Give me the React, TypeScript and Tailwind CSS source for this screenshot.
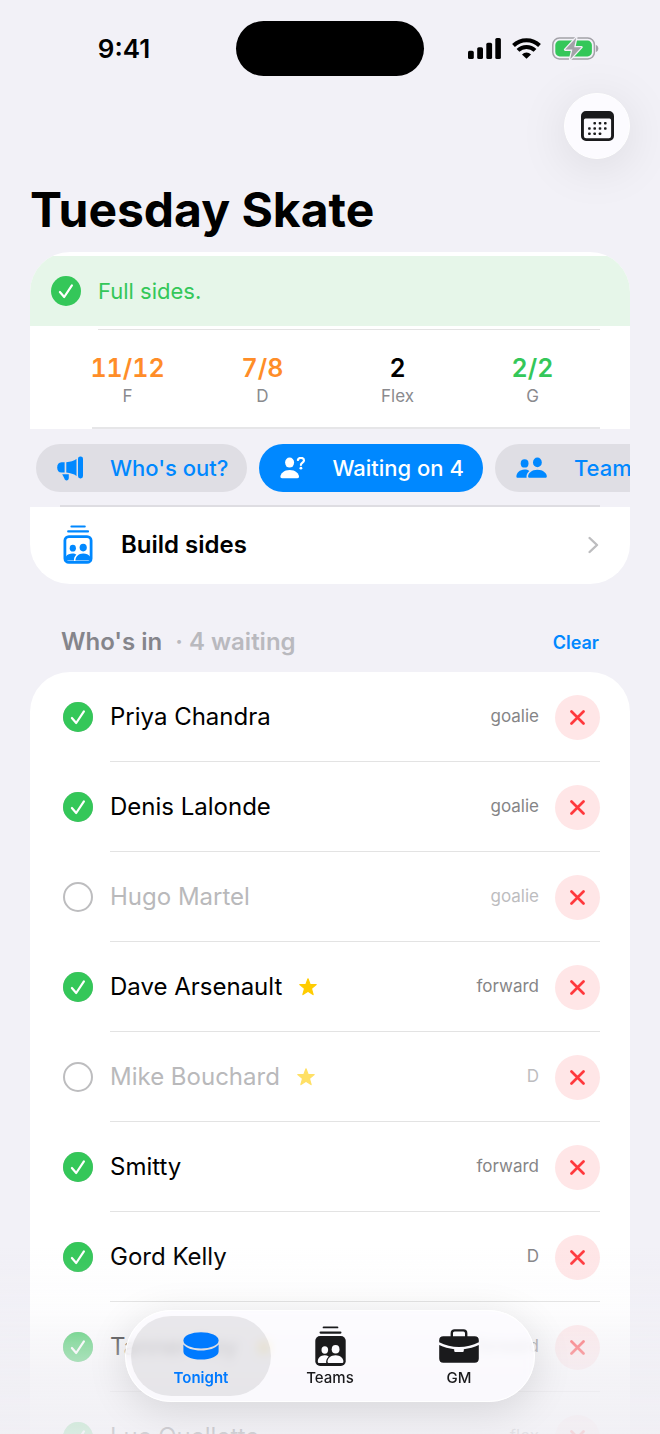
// ============================================================
// Tuesday Skate - Tonight screen
// ============================================================

import React, { useState } from "react";

// ── Data ────────────────────────────────────────────────────

type Player = {
    name: string;
    role: string;
    isIn: boolean;
    star?: boolean;
};

const PLAYERS: Player[] = [
    { name: "Priya Chandra", role: "goalie", isIn: true },
    { name: "Denis Lalonde", role: "goalie", isIn: true },
    { name: "Hugo Martel", role: "goalie", isIn: false },
    { name: "Dave Arsenault", role: "forward", isIn: true, star: true },
    { name: "Mike Bouchard", role: "D", isIn: false, star: true },
    { name: "Smitty", role: "forward", isIn: true },
    { name: "Gord Kelly", role: "D", isIn: true },
    { name: "Tanner Roy", role: "forward", isIn: true, star: true },
    { name: "Luc Ouellette", role: "flex", isIn: true },
];

const STATS = [
    { value: "11/12", label: "F", color: "text-[#ff8d28]" },
    { value: "7/8", label: "D", color: "text-[#ff8d28]" },
    { value: "2", label: "Flex", color: "text-black" },
    { value: "2/2", label: "G", color: "text-[#34c759]" },
];

// ── Icons ───────────────────────────────────────────────────

function SignalIcon() {
    return (
        <svg width="33" height="21" viewBox="0 0 33 21" fill="currentColor">
            <rect x="0" y="12.8" width="5.8" height="8.2" rx="1.6" />
            <rect x="9.2" y="9.2" width="5.8" height="11.8" rx="1.6" />
            <rect x="18.3" y="4.8" width="5.8" height="16.2" rx="1.6" />
            <rect x="27.3" y="0" width="5.6" height="21" rx="1.6" />
        </svg>
    );
}

function WifiIcon() {
    return (
        <svg width="29" height="21" viewBox="0 0 29 21" fill="none" stroke="currentColor" strokeWidth="4">
            <path d="M1.5 7.5 A18.6 18.6 0 0 1 27.5 7.5" />
            <path d="M6 12.4 A12.2 12.2 0 0 1 23 12.4" />
            <path d="M14.5 20.8 L10 16.4 A6.4 6.4 0 0 1 19 16.4 Z" fill="currentColor" stroke="none" />
        </svg>
    );
}

function BatteryIcon() {
    return (
        <svg width="47" height="23" viewBox="0 0 47 23">
            <rect x="0.8" y="1.1" width="41.6" height="20.8" rx="6.6" fill="none" stroke="#a3a2a8" strokeWidth="1.5" />
            <rect x="3.3" y="3.6" width="36.6" height="15.8" rx="4.4" fill="#34c759" />
            <path d="M43.9 8 C47.1 8.8 47.1 14.2 43.9 15 Z" fill="#a3a2a8" />
            <path
                d="M24.2 0.8 L13.2 12.6 H20.4 L18.2 22.2 L29.4 10.2 H22.2 Z"
                fill="#a3a2a8"
                stroke="#f2f1f7"
                strokeWidth="2.6"
                strokeLinejoin="round"
                paintOrder="stroke"
            />
        </svg>
    );
}

function CalendarIcon() {
    const dots = [
        [13.7, 12.3], [19, 12.3], [24.3, 12.3],
        [8.4, 17.5], [13.7, 17.5], [19, 17.5], [24.3, 17.5],
        [8.4, 22.7], [13.7, 22.7], [19, 22.7],
    ];
    return (
        <svg width="33" height="30" viewBox="0 0 33 30" fill="#1a1a1c">
            <path
                fillRule="evenodd"
                d="M5 0 H28 A5 5 0 0 1 33 5 V25 A5 5 0 0 1 28 30 H5 A5 5 0 0 1 0 25 V5 A5 5 0 0 1 5 0 Z M4.5 7.6 A1.6 1.6 0 0 0 2.9 9.2 V25 A2.2 2.2 0 0 0 5.1 27.2 H27.9 A2.2 2.2 0 0 0 30.1 25 V9.2 A1.6 1.6 0 0 0 28.5 7.6 Z"
            />
            {dots.map(([x, y]) => (
                <rect key={`${x}-${y}`} x={x - 1.3} y={y - 1.3} width="2.6" height="2.6" rx="0.8" />
            ))}
        </svg>
    );
}

function CheckCircle({ className = "" }: { className?: string }) {
    return (
        <svg className={className} width="30" height="30" viewBox="0 0 30 30" fill="none">
            <circle cx="15" cy="15" r="15" fill="#34c759" />
            <path d="M8.9 16 L13.2 21 L20.9 9.4" stroke="#fff" strokeWidth="2.2" strokeLinecap="round" strokeLinejoin="round" />
        </svg>
    );
}

function StarIcon() {
    return (
        <svg width="18" height="18" viewBox="0 0 18 18" fill="#ffcc00">
            <path
                d="M9 0.8 L11.1 6.4 L17.2 6.6 L12.4 10.5 L14.1 16.6 L9 13.2 L3.9 16.6 L5.6 10.5 L0.8 6.6 L6.9 6.4 Z"
                stroke="#ffcc00"
                strokeWidth="1.2"
                strokeLinejoin="round"
            />
        </svg>
    );
}

function MegaphoneIcon() {
    return (
        <svg width="27" height="25" viewBox="0 0 27 25" fill="currentColor">
            <rect x="21" y="0.4" width="5" height="22" rx="2.3" />
            <path d="M9.3 6.2 C13.4 5.8 16.8 4.6 19.5 2.9 V19.9 C16.8 18.2 13.4 17 9.3 16.6 Z" />
            <path d="M7.6 6.3 V16.5 H4.6 C1.6 16.5 0.2 14.4 0.2 11.4 C0.2 8.4 1.6 6.3 4.6 6.3 Z" />
            <path d="M5.2 18.2 H11.8 V21.8 C11.8 23.6 10.8 24.4 9.6 24.4 C8.4 24.4 7.6 23.6 7.3 22.2 Z" />
        </svg>
    );
}

function PersonQuestionIcon() {
    return (
        <svg width="26" height="22" viewBox="0 0 26 22" fill="currentColor">
            <ellipse cx="9.6" cy="5.6" rx="4.5" ry="5" />
            <path d="M2 21.2 C0.9 21.2 0.4 20.6 0.4 19.6 C0.4 16.6 4 12.9 9.7 12.9 C15.4 12.9 19 16.6 19 19.6 C19 20.6 18.5 21.2 17.4 21.2 Z" />
            <path d="M17.9 3 C18.2 1.4 19.4 0.9 20.9 0.9 C22.7 0.9 24 1.9 24 3.4 C24 5.6 20.9 5.6 20.9 8" fill="none" stroke="currentColor" strokeWidth="2.2" strokeLinecap="round" />
            <circle cx="20.9" cy="11.2" r="1.4" />
        </svg>
    );
}

function PeopleIcon() {
    return (
        <svg width="32" height="22" viewBox="0 0 32 22" fill="currentColor">
            <ellipse cx="8.6" cy="6.4" rx="3.9" ry="4.2" />
            <ellipse cx="21.4" cy="5.4" rx="4.4" ry="4.9" />
            <path d="M1.8 20.8 C0.8 20.8 0.4 20.2 0.4 19.4 C0.4 16.4 3.6 12.6 8.6 12.6 C10.4 12.6 12 13.1 13.3 13.9 C11.2 15.6 10.2 18 10.6 20.8 Z" />
            <path d="M13.8 20.8 C12.7 20.8 12.1 20.2 12.1 19.2 C12.1 16.4 15.6 12.7 21.4 12.7 C27.2 12.7 30.8 16.4 30.8 19.2 C30.8 20.2 30.2 20.8 29.1 20.8 Z" />
        </svg>
    );
}

// Stack of cards with two people, outlined in the list row
function StackIcon() {
    return (
        <svg width="30" height="39" viewBox="0 0 30 39" fill="none" stroke="currentColor">
            <path d="M8.4 1.5 H21.8" strokeWidth="2" strokeLinecap="round" />
            <path d="M5.2 6.4 H25" strokeWidth="2.2" strokeLinecap="round" />
            <rect x="1.9" y="11.6" width="26.2" height="25.8" rx="4" fill="#fff" strokeWidth="2.8" />
            <g fill="currentColor" stroke="none">
                <ellipse cx="9.8" cy="23.2" rx="3.1" ry="3.4" />
                <ellipse cx="20.2" cy="22.6" rx="3.6" ry="3.8" />
                <path d="M3 35.6 V31.4 C4.4 29.2 6.8 28.4 9.6 28.4 C11 28.4 12.4 28.8 13.4 29.6 C11.6 31.4 10.8 33.4 11 35.6 Z" />
                <path d="M12.4 35.6 C12.2 32 15.4 28.6 20.2 28.6 C23.2 28.6 25.6 29.8 27 31.6 V35.6 Z" />
            </g>
        </svg>
    );
}

// Same stack, filled, for the tab bar
function StackFillIcon() {
    return (
        <svg width="31" height="40" viewBox="0 0 31 40" fill="none">
            <path d="M8.6 1.4 H22.4" stroke="currentColor" strokeWidth="1.9" strokeLinecap="round" />
            <path d="M5.6 6.6 H25.4" stroke="currentColor" strokeWidth="2.2" strokeLinecap="round" />
            <rect x="0.3" y="10" width="30.4" height="30" rx="4.8" fill="currentColor" />
            <g fill="#fcfbff">
                <ellipse cx="9.8" cy="24" rx="3.3" ry="3.7" />
                <ellipse cx="20.6" cy="23.2" rx="3.9" ry="4.3" />
                <path d="M4.4 37 C3.4 37 2.8 36.4 2.8 35.4 C2.8 32 5.6 29.2 9.6 29.2 C11.2 29.2 12.6 29.6 13.7 30.4 C11.8 32.2 10.9 34.4 11.2 37 Z" />
                <path d="M14 37 C13 37 12.5 36.4 12.5 35.4 C12.5 32.2 15.8 29.2 20.6 29.2 C25.2 29.2 28.4 32.2 28.4 35.4 C28.4 36.4 27.8 37 26.8 37 Z" />
            </g>
        </svg>
    );
}

function PuckIcon() {
    return (
        <svg width="36" height="28" viewBox="0 0 36 28" fill="currentColor">
            <ellipse cx="18" cy="8.4" rx="17.6" ry="8.2" />
            <path d="M0.4 12.4 C3.4 16.2 10 18.4 18 18.4 C26 18.4 32.6 16.2 35.6 12.4 V19.4 C35.6 24 27.8 27.6 18 27.6 C8.2 27.6 0.4 24 0.4 19.4 Z" />
        </svg>
    );
}

function BriefcaseIcon() {
    return (
        <svg width="40" height="34" viewBox="0 0 40 34" fill="currentColor">
            <path d="M12.8 8 V4.2 C12.8 2.4 13.8 1.4 15.6 1.4 H24.4 C26.2 1.4 27.2 2.4 27.2 4.2 V8" fill="none" stroke="currentColor" strokeWidth="2.4" />
            <path d="M4.4 7.2 H35.6 C38.4 7.2 39.8 8.6 39.8 11.2 V13.2 C34 16.4 27 18 20 18 C13 18 6 16.4 0.2 13.2 V11.2 C0.2 8.6 1.6 7.2 4.4 7.2 Z" />
            <path d="M0.2 16 C4.8 18.3 9.8 19.6 15.2 20.2 V21.4 C15.2 22.5 15.8 23 16.8 23 H23.2 C24.2 23 24.8 22.5 24.8 21.4 V20.2 C30.2 19.6 35.2 18.3 39.8 16 V29.6 C39.8 32.4 38.4 33.8 35.6 33.8 H4.4 C1.6 33.8 0.2 32.4 0.2 29.6 Z" />
        </svg>
    );
}

// ── Status bar ──────────────────────────────────────────────

function StatusBar() {
    return (
        <div className="grid grid-cols-[1fr_auto_1fr] items-center pt-[21px]">
            <div className="pl-3 text-center text-[26px] font-semibold leading-8">9:41</div>
            <div className="h-[55px] w-[188px] rounded-full bg-black" />
            <div className="flex items-center justify-center gap-[11px] pr-[18px]">
                <SignalIcon />
                <WifiIcon />
                <BatteryIcon />
            </div>
        </div>
    );
}

// ── Summary card ────────────────────────────────────────────

function SummaryCard() {
    return (
        <section className="overflow-hidden rounded-[40px] bg-white pt-1">
            <div className="flex h-[70px] items-center gap-[17px] bg-[#e6f6e9] px-[21px] text-[22px] text-[#34c759]">
                <CheckCircle />
                <span>Full sides.</span>
            </div>

            <div className="mr-[30px] ml-[68px] mt-[3px] h-px bg-[#e3e3e3]" />

            <div className="grid h-[97px] grid-cols-4 items-center px-[30px] pt-[2px]">
                {STATS.map(({ value, label, color }) => (
                    <div key={label} className="text-center">
                        <div className={`text-[25px] font-semibold leading-8 tabular-nums ${color}`}>{value}</div>
                        <div className="text-[17px] leading-6 text-[#8a8a8e]">{label}</div>
                    </div>
                ))}
            </div>

            <div className="bg-[#f2f1f7]">
                <div className="flex bg-white">
                    <div className="ml-[62px] mr-[30px] h-[2px] grow bg-[#e6e6e8]" />
                </div>
                <div className="flex gap-3 overflow-hidden pt-[15px] pb-[13px] pl-[6px]">
                    <button className="flex h-12 shrink-0 items-center gap-[26px] rounded-full bg-[#dfdee4] pr-[19px] pl-[21px] text-[22px] font-medium text-[#0088ff]">
                        <MegaphoneIcon />
                        Who's out?
                    </button>
                    <button className="flex h-12 shrink-0 items-center gap-[26px] rounded-full bg-[#0088ff] pr-[19px] pl-[21px] text-[22px] font-medium text-white">
                        <PersonQuestionIcon />
                        Waiting on 4
                    </button>
                    <button className="flex h-12 shrink-0 items-center gap-[26px] rounded-full bg-[#dfdee4] pr-[19px] pl-[21px] text-[22px] font-medium text-[#0088ff]">
                        <PeopleIcon />
                        Teams
                    </button>
                </div>
                <div className="mx-[30px] h-[2px] bg-[#dedde2]" />
            </div>

            <button className="flex h-[77px] w-full items-center pr-[31px] pb-[2px] pl-[33px] text-left text-[24px] font-semibold">
                <span className="text-[#0088ff]">
                    <StackIcon />
                </span>
                <span className="ml-7 grow">Build sides</span>
                <svg width="11" height="18" viewBox="0 0 11 18" fill="none" stroke="#bdbdbf" strokeWidth="2.4" strokeLinecap="round" strokeLinejoin="round">
                    <path d="M1.6 2 L9 9 L1.6 16" />
                </svg>
            </button>
        </section>
    );
}

// ── Player row ──────────────────────────────────────────────

function PlayerRow({ player, onToggle }: { player: Player; onToggle: () => void }) {
    const { name, role, isIn, star } = player;
    return (
        <li className="flex h-[90px] pl-[33px]">
            <label className="flex grow items-center">
                <span className="grid place-items-center">
                    <input
                        type="checkbox"
                        checked={isIn}
                        onChange={onToggle}
                        className="col-start-1 row-start-1 size-[30px] appearance-none rounded-full border-[2px] border-[#bdbdbf]"
                    />
                    {isIn && <CheckCircle className="pointer-events-none col-start-1 row-start-1" />}
                </span>
                <span className={`ml-[17px] text-[24px] ${isIn ? "text-black" : "text-[#b9b9bb]"}`}>{name}</span>
                {star && (
                    <span className={`ml-[17px] ${isIn ? "" : "opacity-60"}`}>
                        <StarIcon />
                    </span>
                )}
            </label>
            <div className="flex items-center gap-4 pr-[30px]">
                <span className={`text-[17px] ${isIn ? "text-[#858587]" : "text-[#bdbdbf]"}`}>{role}</span>
                <button aria-label={`Remove ${name}`} className="grid size-[45px] place-items-center rounded-full bg-[#ffe6e7]">
                    <svg width="15" height="15" viewBox="0 0 15 15" stroke="#ff383c" strokeWidth="2.7" strokeLinecap="round">
                        <path d="M1.5 1.5 L13.5 13.5 M13.5 1.5 L1.5 13.5" />
                    </svg>
                </button>
            </div>
        </li>
    );
}

// ── Tab bar ─────────────────────────────────────────────────

function TabBar() {
    const [active, setActive] = useState("Tonight");
    const tabs = [
        { name: "Tonight", icon: <PuckIcon /> },
        { name: "Teams", icon: <StackFillIcon /> },
        { name: "GM", icon: <BriefcaseIcon /> },
    ];
    return (
        <nav className="fixed bottom-8 left-1/2 flex -translate-x-1/2 -space-x-[11px] rounded-full border border-white bg-[#fcfbff]/75 p-[5px] shadow-[0_8px_40px_rgba(0,0,0,0.12)] backdrop-blur-[5px]">
            {tabs.map(({ name, icon }) => (
                <button
                    key={name}
                    onClick={() => setActive(name)}
                    className={`flex h-20 w-[140px] flex-col items-center rounded-full pt-[7px] text-[15px] leading-5 ${
                        active === name ? "bg-black/8 font-semibold text-[#007aff]" : "font-medium text-[#1a1a1c]"
                    }`}
                >
                    <span className="grid h-[45px] place-items-center">{icon}</span>
                    {name}
                </button>
            ))}
        </nav>
    );
}

// ── App ─────────────────────────────────────────────────────

export default function App() {
    const [players, setPlayers] = useState(PLAYERS);

    const toggle = (name: string) =>
        setPlayers((list) => list.map((p) => (p.name === name ? { ...p, isIn: !p.isIn } : p)));

    return (
        <div className="h-screen overflow-hidden bg-[#f2f1f7] font-[Inter,sans-serif] text-black">
            <StatusBar />

            <header className="px-[30px]">
                <div className="flex justify-end pt-[17px]">
                    <button
                        aria-label="Calendar"
                        className="grid size-[66px] place-items-center rounded-full border border-white bg-[#fcfbff] shadow-[0_8px_50px_rgba(0,0,0,0.1)]"
                    >
                        <CalendarIcon />
                    </button>
                </div>
                <h1 className="mt-[21px] text-[48px] font-bold leading-[60px]">Tuesday Skate</h1>
            </header>

            <main className="px-[30px] pt-3">
                <SummaryCard />

                <div className="flex h-[88px] items-center justify-between px-[31px] pt-7">
                    <h2 className="flex gap-[13px] text-[24px] font-semibold text-[#85858b]">
                        Who's in <span className="text-[#b9b9be]">· 4 waiting</span>
                    </h2>
                    <button className="text-[18px] font-semibold text-[#0088ff]">Clear</button>
                </div>

                <ul className="rounded-t-[40px] bg-white">
                    {players.map((player, i) => (
                        <React.Fragment key={player.name}>
                            {i > 0 && <li aria-hidden="true" className="-mt-px mr-[30px] ml-20 h-px bg-[#e3e3e3]" />}
                            <PlayerRow player={player} onToggle={() => toggle(player.name)} />
                        </React.Fragment>
                    ))}
                </ul>
            </main>

            {/* Fade behind the tab bar */}
            <div className="pointer-events-none fixed inset-x-0 bottom-0 h-[190px] bg-[linear-gradient(to_bottom,rgba(240,239,244,0)_0%,rgba(240,239,244,0.15)_35%,rgba(240,239,244,0.5)_52%,rgba(240,239,244,0.75)_72%,rgba(240,239,244,0.88)_100%)]" />
            <TabBar />
        </div>
    );
}
